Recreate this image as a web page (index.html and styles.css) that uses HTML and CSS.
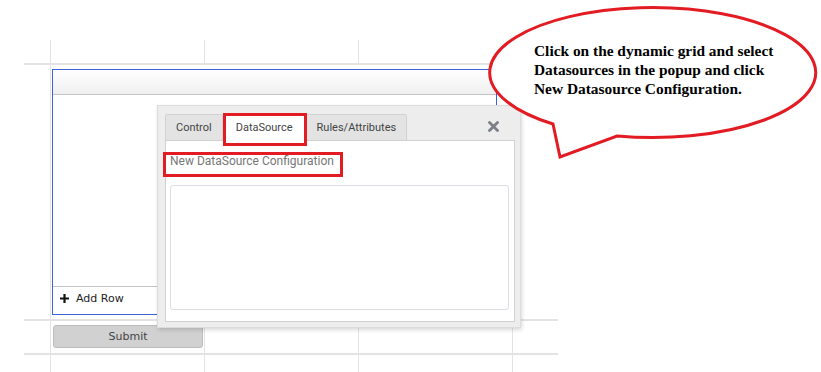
FILE: index.html
```html
<!DOCTYPE html>
<html>
<head>
    <title>Dynamic Grid - DataSource</title>
    <link rel="stylesheet" href="styles.css">
</head>
<body>
    <div class="page">
        <div class="row row-top">
            <div class="cell cell-first"></div>
            <div class="cell"></div>
            <div class="cell"></div>
            <div class="cell"></div>
            <div class="cell"></div>
        </div>
        <div class="row row-grid">
            <div class="cell cell-first"></div>
            <div class="cell cell-span">
                <div class="dyn-grid">
                    <div class="grid-head"></div>
                    <div class="grid-body"></div>
                    <div class="grid-foot">
                        <span class="plus">
                            <svg width="9" height="9" viewBox="0 0 9 9"><path d="M4.5 0v9M0 4.5h9" stroke="#111" stroke-width="2.2"/></svg>
                        </span>
                        Add Row
                    </div>
                </div>
            </div>
            <div class="cell"></div>
        </div>
        <div class="row row-submit">
            <div class="cell cell-first"></div>
            <div class="cell">
                <button class="submit-btn">Submit</button>
            </div>
            <div class="cell"></div>
            <div class="cell"></div>
            <div class="cell"></div>
        </div>
        <div class="row row-last">
            <div class="cell cell-first"></div>
            <div class="cell"></div>
            <div class="cell"></div>
            <div class="cell"></div>
            <div class="cell"></div>
        </div>
    </div>

    <div class="popup">
        <div class="tabs">
            <div class="tab">Control</div>
            <div class="tab active">DataSource</div>
            <div class="tab">Rules/Attributes</div>
            <div class="close">
                <svg width="11" height="11" viewBox="0 0 11 11"><path d="M1.5 1.5l8 8M9.5 1.5l-8 8" stroke="#7b7f86" stroke-width="2.8" stroke-linecap="round"/></svg>
            </div>
        </div>
        <div class="tab-panel">
            <div class="new-config">New DataSource Configuration</div>
            <div class="config-box"></div>
        </div>
        <div class="mark mark-tab"></div>
        <div class="mark mark-link"></div>
    </div>

    <div class="callout">
        <svg width="336" height="160" viewBox="0 0 336 160">
            <path d="M67 120 L74 153 L131 132 A163 65 0 1 0 67 120 Z" fill="#fff" stroke="#e31b23" stroke-width="3"/>
        </svg>
        <div class="callout-text">
            Click on the dynamic grid and select<br>
            Datasources in the popup and click<br>
            New Datasource Configuration.
        </div>
    </div>
</body>
</html>
```

FILE: styles.css
```css
body {
    margin: 0;
    background-color: #fff;
    font-family: 'Roboto', sans-serif;
    color: #333;
}

.page {
    width: 534px;
    padding: 40px 0 0 24px;
}

.row {
    display: grid;
    grid-template-columns: 26px 154px 154px 154px 46px;
    border-bottom: 2px solid #e3e3e3;
}

.cell {
    border-left: 1px solid #e3e3e3;
}

.cell-first {
    border-left: none;
}

.row-top {
    height: 23px;
}

.row-grid {
    height: 254px;
}

.cell-span {
    grid-column: span 3;
    padding: 4px 0 0 1px;
}

.row-submit {
    height: 32px;
}

.row-last {
    height: 20px;
    border-bottom: none;
}

.dyn-grid {
    width: 443px;
    height: 244px;
    border: 1px solid #3b63d9;
    display: flex;
    flex-direction: column;
}

.grid-head {
    height: 24px;
    background: linear-gradient(#fff, #efefef);
    border-bottom: 1px solid #c4c4c4;
}

.grid-body {
    flex: 1;
}

.grid-foot {
    height: 28px;
    box-sizing: border-box;
    padding: 0 0 4px 7px;
    border-top: 1px solid #c4c4c4;
    display: flex;
    align-items: center;
    font-family: 'DejaVu Sans', sans-serif;
    font-size: 11px;
    color: #222;
}

.plus {
    display: flex;
    margin-right: 7px;
}

.submit-btn {
    margin: 4px 0 0 2px;
    width: 150px;
    height: 23px;
    background-color: #d1d1d1;
    border: 1px solid #bdbdbd;
    border-radius: 3px;
    font-family: 'DejaVu Sans', sans-serif;
    font-size: 11px;
    color: #444;
    padding: 0;
}

.popup {
    position: absolute;
    left: 157px;
    top: 105px;
    width: 350px;
    height: 209px;
    padding: 7px 5px 5px 7px;
    background-color: #ededed;
    border: 1px solid #dcdcdc;
    box-shadow: 1px 2px 4px rgba(0, 0, 0, 0.15);
    display: flex;
    flex-direction: column;
}

.tabs {
    display: flex;
    height: 27px;
    align-items: flex-end;
}

.tab {
    height: 26px;
    box-sizing: border-box;
    padding: 0 10px;
    line-height: 25px;
    font-size: 11px;
    color: #444;
    background-color: #e3e3e3;
    border: 1px solid #d2d2d2;
    border-bottom: none;
    border-radius: 2px 2px 0 0;
}

.tab:last-of-type {
    padding: 0 11px;
}

.tab.active {
    background-color: #fff;
    height: 27px;
    padding: 0 12px;
    line-height: 26px;
    margin-bottom: -1px;
    position: relative;
}

.close {
    margin-left: auto;
    margin-right: 16px;
    align-self: center;
    display: flex;
}

.tab-panel {
    flex: 1;
    background-color: #fff;
    border: 1px solid #d0d0d0;
    padding: 13px 5px 11px 4px;
    display: flex;
    flex-direction: column;
}

.new-config {
    font-size: 12px;
    color: #777;
    height: 31px;
}

.config-box {
    flex: 1;
    border: 1px solid #dcdce4;
    border-radius: 3px;
}

.mark {
    position: absolute;
    border: 3px solid #e31b23;
}

.mark-tab {
    left: 65px;
    top: 7px;
    width: 78px;
    height: 27px;
}

.mark-link {
    left: 5px;
    top: 46px;
    width: 174px;
    height: 19px;
}

.callout {
    position: absolute;
    left: 486px;
    top: 4px;
    width: 336px;
    height: 160px;
}

.callout-text {
    position: absolute;
    left: 48px;
    top: 37px;
    font-family: 'Liberation Serif', serif;
    font-weight: bold;
    font-size: 15.4px;
    line-height: 19px;
    color: #000;
    white-space: nowrap;
}
```
